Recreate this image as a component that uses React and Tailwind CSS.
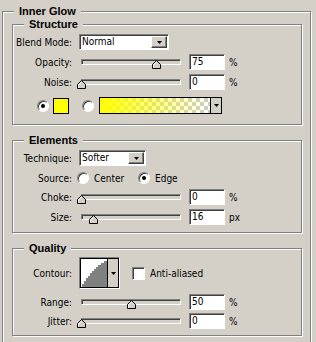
import React from 'react';

const sunken =
  'border border-t-[#808080] border-l-[#808080] border-b-white border-r-white shadow-[inset_1px_1px_0_#404040]';
const raised =
  'border border-t-white border-l-white border-b-[#404040] border-r-[#404040] shadow-[inset_-1px_-1px_0_#808080]';

const Arrow = () => (
  <svg width="5" height="3" viewBox="0 0 5 3">
    <path d="M0 0h5L2.5 3z" fill="#000" />
  </svg>
);

const Label = ({ children }) => <div className="w-[59px] shrink-0 text-right">{children}</div>;

const Group = ({ title, className = '', children }) => (
  <div
    className={`relative border border-[#808080] shadow-[inset_1px_1px_0_#fff,1px_1px_0_#fff] ${className}`}
  >
    <span className="absolute left-[11px] -top-[7px] px-[5px] bg-[#d4d0c8] font-bold text-[11px] leading-[13px] font-['Liberation_Sans',Arial,sans-serif]">
      {title}
    </span>
    {children}
  </div>
);

const Select = ({ value, width }) => (
  <div className={`ml-[7px] h-[16px] flex items-stretch bg-white ${sunken} ${width}`}>
    <span className="flex-1 pl-[2px] leading-[14px]">{value}</span>
    <div className={`w-[16px] my-[1px] mr-[1px] bg-[#d4d0c8] flex items-center justify-center ${raised}`}>
      <Arrow />
    </div>
  </div>
);

const Radio = ({ checked }) => (
  <div className={`w-[12px] h-[12px] shrink-0 rounded-full bg-white flex items-center justify-center ${sunken}`}>
    {checked && <div className="w-[4px] h-[4px] rounded-full bg-black" />}
  </div>
);

const Thumb = ({ pct }) => (
  <svg className="absolute top-[6px]" style={{ left: pct }} width="9" height="9" viewBox="0 0 9 9">
    <polygon points="0.5,8.5 0.5,4.5 4.5,0.5 8.5,4.5 8.5,8.5" fill="#d4d0c8" stroke="#000" />
    <polyline points="1.5,7.5 1.5,5 4.5,2" fill="none" stroke="#fff" />
  </svg>
);

const SliderRow = ({ label, value, pct, unit = '%', className = '' }) => (
  <div className={`flex items-center h-[16px] ${className}`}>
    <Label>{label}</Label>
    <div className="relative ml-[5px] w-[108px] h-[16px] flex items-center">
      <div className={`mx-[4px] w-[100px] h-[6px] bg-[#d4d0c8] ${sunken}`} />
      <Thumb pct={pct} />
    </div>
    <div className={`ml-[4px] w-[36px] h-[16px] bg-white pl-[2px] leading-[14px] ${sunken}`}>{value}</div>
    <span className="ml-[4px]">{unit}</span>
  </div>
);

const Contour = () => (
  <div className={`ml-[7px] w-[41px] h-[32px] flex ${sunken}`}>
    <div className="flex-1 flex border border-black">
      <svg width="26" height="28" viewBox="0 0 26 28" className="bg-white">
        <path
          d="M1 28V25H3V22H5V19H7V17H9V14H11V12H13V10H15V8H17V6H20V4H23V2H26V28Z"
          fill="#808080"
        />
      </svg>
      <div className="flex-1 border-l border-black bg-[#d4d0c8] flex items-center justify-center">
        <Arrow />
      </div>
    </div>
  </div>
);

export default function App() {
  return (
    <div className="w-[316px] h-[342px] overflow-hidden bg-[#d4d0c8] pt-[11px] pl-[2px] text-black text-[10px] font-['DejaVu_Sans_Condensed','Liberation_Sans',Arial,sans-serif]">
      <Group title="Inner Glow" className="w-[309px] pt-[12px] pl-[9px] pb-[20px]">
        <Group title="Structure" className="w-[290px] pt-[9px] pb-[10px]">
          <div className="flex items-center h-[16px]">
            <Label>Blend Mode:</Label>
            <Select value="Normal" width="w-[90px]" />
          </div>
          <SliderRow label="Opacity:" value="75" pct={75} className="mt-[4px]" />
          <SliderRow label="Noise:" value="0" pct={0} className="mt-[4px]" />
          <div className="mt-[7px] h-[17px] flex items-center pl-[24px]">
            <Radio checked />
            <div className="ml-[4px] w-[16px] h-[16px] bg-[#ffff00] border border-black" />
            <div className="ml-[13px]">
              <Radio />
            </div>
            <div className="ml-[5px] w-[123px] h-[17px] flex border border-black">
              <div className="flex-1 bg-[linear-gradient(to_right,#ffff00,rgba(255,255,0,0)),conic-gradient(#fff_25%,#cccccc_0_50%,#fff_0_75%,#cccccc_0)] bg-size-[100%_100%,8px_8px]" />
              <div className="w-[11px] border-l border-black bg-[#d4d0c8] flex items-center justify-center">
                <Arrow />
              </div>
            </div>
          </div>
        </Group>

        <Group title="Elements" className="w-[290px] mt-[15px] pt-[9px] pb-[7px]">
          <div className="flex items-center h-[16px]">
            <Label>Technique:</Label>
            <Select value="Softer" width="w-[67px]" />
          </div>
          <div className="mt-[6px] h-[12px] flex items-center">
            <Label>Source:</Label>
            <div className="ml-[5px] w-[61px] flex items-center">
              <Radio />
              <span className="ml-[5px]">Center</span>
            </div>
            <Radio checked />
            <span className="ml-[5px]">Edge</span>
          </div>
          <SliderRow label="Choke:" value="0" pct={0} className="mt-[5px]" />
          <SliderRow label="Size:" value="16" pct={12} unit="px" className="mt-[4px]" />
        </Group>

        <Group title="Quality" className="w-[290px] mt-[15px] pt-[8px] pb-[6px]">
          <div className="flex items-center h-[32px]">
            <Label>Contour:</Label>
            <Contour />
            <div className={`ml-[12px] w-[13px] h-[13px] bg-white ${sunken}`} />
            <span className="ml-[5px]">Anti-aliased</span>
          </div>
          <SliderRow label="Range:" value="50" pct={50} className="mt-[5px]" />
          <SliderRow label="Jitter:" value="0" pct={0} className="mt-[3px]" />
        </Group>
      </Group>
    </div>
  );
}
